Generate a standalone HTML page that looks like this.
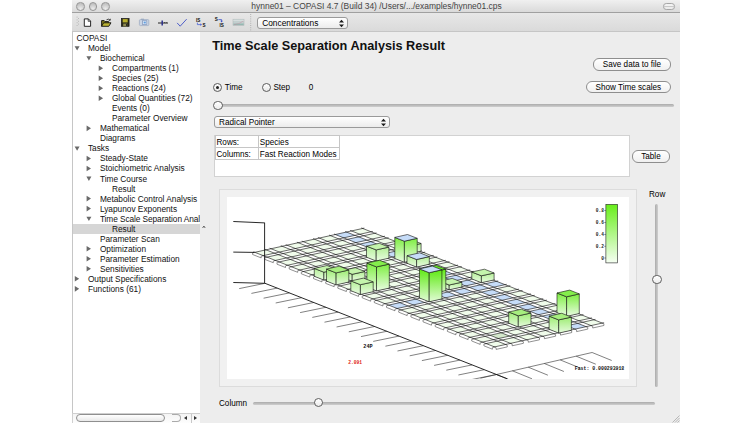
<!DOCTYPE html>
<html><head><meta charset="utf-8">
<style>
html,body{margin:0;padding:0;background:#fff;}
body{width:752px;height:423px;position:relative;overflow:hidden;font-family:"Liberation Sans",sans-serif;color:#000;}
.abs{position:absolute;}
#win{position:absolute;left:72px;top:0;width:608px;height:423px;background:#ededed;}
#title{z-index:2;position:absolute;left:0;top:0;width:608px;height:12.5px;background:linear-gradient(#f0f0f0,#dadada);border-bottom:1px solid #a0a0a0;box-sizing:border-box;}
#title .t{position:absolute;left:1px;width:607px;top:0.6px;height:12px;line-height:11px;text-align:center;font-size:8.45px;color:#444;white-space:nowrap;}
.tl{position:absolute;top:2.1px;width:8.6px;height:8.6px;border-radius:50%;box-sizing:border-box;border:1px solid #969696;background:radial-gradient(circle at 50% 85%,#ededed,#c2c2c2 75%);}
#tb{position:absolute;left:0;top:12px;width:608px;height:20px;background:linear-gradient(#e8e8e8,#dadada);border-bottom:1px solid #c6c6c6;box-sizing:border-box;}
.combo{position:absolute;box-sizing:border-box;border:1px solid #9a9a9a;border-radius:3px;background:linear-gradient(#ffffff,#ececec);font-size:8.2px;white-space:nowrap;}
#tree{position:absolute;left:0px;top:32px;width:128.1px;height:381px;background:#fff;border-left:1px solid #c6c6c6;box-sizing:border-box;overflow:hidden;}
.ti{position:absolute;height:10px;line-height:10px;font-size:8.3px;white-space:nowrap;color:#111;}
.ar{position:absolute;width:0;height:0;}
.ar.r{border-left:4.3px solid #6c6c6c;border-top:2.7px solid transparent;border-bottom:2.7px solid transparent;}
.ar.d{border-top:4.2px solid #6c6c6c;border-left:2.5px solid transparent;border-right:2.5px solid transparent;}
.btn{position:absolute;box-sizing:border-box;border:1px solid #8e8e8e;border-radius:6px;background:linear-gradient(#ffffff,#f0f0f0);font-size:8.15px;text-align:center;white-space:nowrap;}
.lbl{position:absolute;font-size:8.15px;white-space:nowrap;line-height:10px;height:10px;}
.groove{position:absolute;background:linear-gradient(#ababab,#cfcfcf);border-radius:1.6px;}
.groove.v{background:linear-gradient(90deg,#ababab,#cfcfcf);}
.knob{position:absolute;width:9.6px;height:9.6px;border-radius:50%;box-sizing:border-box;border:1px solid #606060;background:linear-gradient(#ffffff,#ececec);}
.radio{position:absolute;width:9px;height:9px;border-radius:50%;box-sizing:border-box;border:1px solid #5c5c5c;background:linear-gradient(#fff,#e8e8e8);}
</style></head><body>
<div id="win">
 <div id="title">
  <div class="tl" style="left:4.3px"></div><div class="tl" style="left:16.7px"></div><div class="tl" style="left:29px"></div>
  <div class="t">hynne01 – COPASI 4.7 (Build 34) /Users/.../examples/hynne01.cps</div>
  <div class="abs" style="left:591.2px;top:3.2px;width:12.2px;height:6.6px;border:1px solid #a6a6a6;border-radius:3.3px;box-sizing:border-box;background:linear-gradient(#f2f2f2 45%,#c9c9c9 50%,#ececec 56%)"></div>
 </div>
 <div id="tb">
  <svg class="abs" style="left:0;top:0" width="190" height="20" viewBox="72 12 190 20">
 <!-- handle -->
 <g fill="#b9b9b9"><rect x="76.6" y="16.6" width="1" height="1"/><rect x="78" y="18" width="1" height="1"/><rect x="76.6" y="19.4" width="1" height="1"/><rect x="78" y="20.8" width="1" height="1"/><rect x="76.6" y="22.2" width="1" height="1"/><rect x="78" y="23.6" width="1" height="1"/><rect x="76.6" y="25" width="1" height="1"/></g>
 <!-- new -->
 <path d="M84.3 18.9 H88.4 L90.6 21.1 V26.3 H84.3 Z" fill="#fff" stroke="#111" stroke-width="0.9" stroke-linejoin="round"/>
 <path d="M88.2 18.9 V21.3 H90.6" fill="none" stroke="#111" stroke-width="0.7"/>
 <!-- open -->
 <path d="M101.6 26.3 V20.6 H104.2 L105 21.6 H108.6 V22.8" fill="#7f7a1c" stroke="#111" stroke-width="0.9" stroke-linejoin="round"/>
 <path d="M101.6 26.3 L103.6 22.8 H111 L108.8 26.3 Z" fill="#bdb533" stroke="#111" stroke-width="0.9" stroke-linejoin="round"/>
 <path d="M106.5 19.8 Q108.6 18.4 110 20 M110.4 18.8 L110.2 20.4 L108.7 20.2" fill="none" stroke="#222" stroke-width="0.8"/>
 <!-- save -->
 <rect x="121.3" y="18.4" width="7.8" height="8" fill="#2a2a1a" stroke="#111" stroke-width="0.6"/>
 <rect x="122.7" y="19.1" width="5" height="3.3" fill="#b7ae2e"/>
 <rect x="123.2" y="23.6" width="4" height="2.8" fill="#8d8a50"/>
 <rect x="126" y="24" width="0.9" height="2" fill="#222"/>
 <!-- camera -->
 <rect x="139.4" y="19.6" width="9.4" height="6" rx="1" fill="#cbd5e3" stroke="#9aa8c0" stroke-width="0.7"/>
 <rect x="141" y="18.7" width="3" height="1.2" fill="#9aa9c0"/>
 <rect x="142.6" y="20.8" width="4.2" height="3.6" fill="#eef3fa" stroke="#6f86b0" stroke-width="0.6"/>
 <rect x="143.6" y="21.6" width="2.2" height="1.9" fill="#5f9fe0"/>
 <!-- slider -->
 <path d="M158 23 H168" stroke="#222" stroke-width="1"/>
 <path d="M162.2 20.4 V25.4" stroke="#2b2f8c" stroke-width="1.5"/>
 <path d="M164.5 22 V23 M166.3 22 V23" stroke="#222" stroke-width="0.6"/>
 <!-- check -->
 <path d="M177.4 23.2 L180.2 26.2 L186.4 19.4" fill="none" stroke="#4050c6" stroke-width="0.9" stroke-linecap="round" stroke-linejoin="round"/>
 <!-- IS->S -->
 <text x="196" y="21.6" font-family="Liberation Sans,sans-serif" font-weight="bold" font-size="4.6" fill="#111">IS</text>
 <path d="M197.4 22.6 V24.6 H201" fill="none" stroke="#4a62d8" stroke-width="0.8"/><path d="M200.4 23.3 L202 24.6 L200.4 25.9Z" fill="#4a62d8"/>
 <text x="202.6" y="27.2" font-family="Liberation Sans,sans-serif" font-weight="bold" font-size="4.6" fill="#111">S</text>
 <!-- S->IS -->
 <text x="214.8" y="21.4" font-family="Liberation Sans,sans-serif" font-weight="bold" font-size="4.6" fill="#111">S</text>
 <path d="M218.4 19.6 H221.6 V21.2" fill="none" stroke="#3b50c8" stroke-width="0.8"/><path d="M220.3 20.8 L221.6 22.4 L222.9 20.8Z" fill="#3b50c8"/>
 <text x="219.6" y="27" font-family="Liberation Sans,sans-serif" font-weight="bold" font-size="4.6" fill="#111">IS</text>
 <!-- plot -->
 <rect x="233" y="19.2" width="11" height="6.4" fill="#c3cfcf" stroke="#aab4b4" stroke-width="0.5"/>
 <path d="M233.5 24.2 H243.6" stroke="#6fa89a" stroke-width="0.8"/>
 <path d="M234 24.6 Q239 24.4 243.4 21" stroke="#c98ca0" stroke-width="0.5" fill="none"/>
 <path d="M233.2 20.2 H243.8" stroke="#e4eaea" stroke-width="0.8"/>
 <!-- separator -->
 <path d="M250.7 14 V31" stroke="#b0b0b0" stroke-width="1" stroke-dasharray="1 1.2"/>
</svg>

  <div class="combo" style="left:184.6px;top:4.5px;width:91.8px;height:12.4px;line-height:11px;padding-left:4.6px;font-size:8.35px">Concentrations
    <svg class="abs" style="left:80.4px;top:1.4px" width="7" height="9" viewBox="0 0 7 9"><path d="M1 3.6 L3.5 0.8 L6 3.6Z M1 5.4 L3.5 8.2 L6 5.4Z" fill="#1a1a1a"/></svg>
  </div>
 </div>
 <div id="tree">
<div class="ti" style="left:3.50px;top:1.10px">COPASI</div>
<div class="ti" style="left:14.90px;top:11.13px">Model</div>
<div class="ti" style="left:26.90px;top:21.16px">Biochemical</div>
<div class="ti" style="left:38.90px;top:31.19px">Compartments (1)</div>
<div class="ti" style="left:38.90px;top:41.22px">Species (25)</div>
<div class="ti" style="left:38.90px;top:51.25px">Reactions (24)</div>
<div class="ti" style="left:38.90px;top:61.28px">Global Quantities (72)</div>
<div class="ti" style="left:38.90px;top:71.31px">Events (0)</div>
<div class="ti" style="left:38.90px;top:81.34px">Parameter Overview</div>
<div class="ti" style="left:26.90px;top:91.37px">Mathematical</div>
<div class="ti" style="left:26.90px;top:101.40px">Diagrams</div>
<div class="ti" style="left:14.90px;top:111.43px">Tasks</div>
<div class="ti" style="left:26.90px;top:121.46px">Steady-State</div>
<div class="ti" style="left:26.90px;top:131.49px">Stoichiometric Analysis</div>
<div class="ti" style="left:26.90px;top:141.52px">Time Course</div>
<div class="ti" style="left:38.90px;top:151.55px">Result</div>
<div class="ti" style="left:26.90px;top:161.58px">Metabolic Control Analysis</div>
<div class="ti" style="left:26.90px;top:171.61px">Lyapunov Exponents</div>
<div class="ti" style="left:26.90px;top:181.64px;letter-spacing:-0.075px;width:100.1px;overflow:hidden">Time Scale Separation Analysis</div>
<div class="abs" style="left:0;top:191.77px;width:128px;height:9.8px;background:#d6d6d6"></div>
<div class="ti" style="left:38.90px;top:191.67px">Result</div>
<div class="ti" style="left:26.90px;top:201.70px">Parameter Scan</div>
<div class="ti" style="left:26.90px;top:211.73px">Optimization</div>
<div class="ti" style="left:26.90px;top:221.76px">Parameter Estimation</div>
<div class="ti" style="left:26.90px;top:231.79px">Sensitivities</div>
<div class="ti" style="left:14.90px;top:241.82px">Output Specifications</div>
<div class="ti" style="left:14.90px;top:251.85px">Functions (61)</div>
<svg class="abs" style="left:0;top:0" width="128" height="381"><path d="M1.60 14.13h5l-2.5 4.4zM13.40 24.16h5l-2.5 4.4zM25.70 33.39l4.4 2.8l-4.4 2.8zM25.70 43.42l4.4 2.8l-4.4 2.8zM25.70 53.45l4.4 2.8l-4.4 2.8zM25.70 63.48l4.4 2.8l-4.4 2.8zM13.60 93.57l4.4 2.8l-4.4 2.8zM1.60 114.43h5l-2.5 4.4zM13.60 123.66l4.4 2.8l-4.4 2.8zM13.60 133.69l4.4 2.8l-4.4 2.8zM13.40 144.52h5l-2.5 4.4zM13.60 163.78l4.4 2.8l-4.4 2.8zM13.60 173.81l4.4 2.8l-4.4 2.8zM13.40 184.64h5l-2.5 4.4zM13.60 213.93l4.4 2.8l-4.4 2.8zM13.60 223.96l4.4 2.8l-4.4 2.8zM13.60 233.99l4.4 2.8l-4.4 2.8zM1.80 244.02l4.4 2.8l-4.4 2.8zM1.80 254.05l4.4 2.8l-4.4 2.8z" fill="#6a6a6a"/></svg>
 </div>
<div class="abs" style="left:0px;top:413px;width:128.1px;height:10px;background:linear-gradient(#f4f4f4,#fdfdfd);border-top:1px solid #cfcfcf;border-left:1px solid #d0d0d0;box-sizing:border-box"></div>
<div class="abs" style="left:4.00px;top:414.3px;width:89px;height:8px;border:1px solid #8f8f8f;border-radius:4px;box-sizing:border-box;background:linear-gradient(#ffffff,#e9e9e9)"></div>
<div class="abs" style="left:100.00px;top:414.3px;width:9px;height:8px;border:1px solid #aaa;border-left:none;border-radius:0 4px 4px 0;box-sizing:border-box;"></div>
<div class="abs" style="left:118.50px;top:414px;width:1px;height:9px;background:#c8c8c8"></div>
<div class="ar" style="position:absolute;left:112.30px;top:416.4px;border-right:3px solid #333;border-top:2px solid transparent;border-bottom:2px solid transparent"></div>
<div class="ar" style="position:absolute;left:121.60px;top:416.4px;border-left:3px solid #333;border-top:2px solid transparent;border-bottom:2px solid transparent"></div>
<svg class="abs" style="left:130.00px;top:224.6px" width="4" height="4" viewBox="0 0 4 4"><path d="M0.6 3 L1.9 1 L3.2 3" stroke="#555" stroke-width="0.9" fill="none"/></svg>
<div class="abs" style="left:140.20px;top:37.5px;font-size:12.7px;font-weight:bold;line-height:16px;white-space:nowrap;color:#111">Time Scale Separation Analysis Result</div>
<div class="btn" style="left:521.30px;top:58.4px;width:77.4px;height:12.4px;line-height:11.2px">Save data to file</div>
<div class="btn" style="left:514.00px;top:81.1px;width:84.7px;height:12.4px;line-height:11.2px">Show Time scales</div>
<div class="btn" style="left:559.80px;top:150px;width:38.4px;height:12.8px;line-height:11.6px">Table</div>
<div class="radio" style="left:140.80px;top:82.8px"></div><div class="abs" style="left:143.80px;top:85.8px;width:3px;height:3px;border-radius:50%;background:#222"></div>
<div class="lbl" style="left:152.80px;top:83.1px">Time</div>
<div class="radio" style="left:189.80px;top:82.8px"></div>
<div class="lbl" style="left:201.40px;top:83.1px">Step</div>
<div class="lbl" style="left:236.80px;top:83.1px">0</div>
<div class="groove" style="left:142.00px;top:104.3px;width:460.2px;height:3.2px"></div>
<div class="knob" style="left:141.00px;top:100.8px"></div>
<div class="combo" style="left:141.50px;top:115.6px;width:176.5px;height:12.2px;line-height:11.6px;padding-left:4.6px">Radical Pointer<svg class="abs" style="left:165.6px;top:1.3px" width="7" height="9" viewBox="0 0 7 9"><path d="M1 3.6 L3.5 0.8 L6 3.6Z M1 5.4 L3.5 8.2 L6 5.4Z" fill="#1a1a1a"/></svg></div>
<div class="abs" style="left:142.10px;top:134.5px;width:415.7px;height:42.2px;background:#fff;border:1px solid #d2d2d2;box-sizing:border-box"></div>
<div class="abs" style="left:142.70px;top:135px;width:124.9px;height:24.6px;border:1px solid #c6c6c6;box-sizing:border-box"></div>
<div class="abs" style="left:142.70px;top:147.2px;width:124.9px;height:1px;background:#c6c6c6"></div>
<div class="abs" style="left:185.80px;top:135px;width:1px;height:24.6px;background:#c6c6c6"></div>
<div class="lbl" style="left:144.50px;top:138.2px">Rows:</div>
<div class="lbl" style="left:187.80px;top:138.2px">Species</div>
<div class="lbl" style="left:144.50px;top:150.2px">Columns:</div>
<div class="lbl" style="left:187.80px;top:150.2px">Fast Reaction Modes</div>
<div class="abs" style="left:147.20px;top:189.4px;width:418.3px;height:197.2px;background:#f1f1f1;border:1px solid #dcdcdc;box-sizing:border-box"></div>
<div class="abs" style="left:154.90px;top:196.9px;width:402.4px;height:182px;background:#fff"></div>
<div class="lbl" style="left:577.00px;top:190.3px">Row</div>
<div class="groove v" style="left:583.00px;top:204px;width:3.2px;height:183px"></div>
<div class="knob" style="left:580.10px;top:274.5px"></div>
<div class="lbl" style="left:147.00px;top:399.2px">Column</div>
<div class="groove" style="left:181.00px;top:401.6px;width:401.8px;height:3.2px"></div>
<div class="knob" style="left:241.50px;top:397.7px"></div>
<svg class="abs" style="left:598.00px;top:413px" width="10" height="10" viewBox="0 0 10 10"><path d="M9.5 2.5 L2.5 9.5 M9.5 5 L5 9.5 M9.5 7.5 L7.5 9.5" stroke="#a8a8a8" stroke-width="0.8" fill="none"/></svg>
<div class="abs" style="left:155.70px;top:196.9px;width:401.6px;height:182px;overflow:hidden"><svg width="401.6" height="182" viewBox="0 0 401.6 182" style="position:absolute;left:0;top:0">
<defs>
<linearGradient id="gp" x1="0" y1="0" x2="0" y2="1"><stop offset="0" stop-color="#b4f096"/><stop offset="1" stop-color="#e9fbe2"/></linearGradient>
 <linearGradient id="gq" x1="0" y1="0" x2="0" y2="1"><stop offset="0" stop-color="#9dec72"/><stop offset="1" stop-color="#e6fbde"/></linearGradient>
<linearGradient id="gm" x1="0" y1="0" x2="0" y2="1"><stop offset="0" stop-color="#7dee40"/><stop offset="1" stop-color="#e9fce2"/></linearGradient>
<linearGradient id="gs" x1="0" y1="0" x2="0" y2="1"><stop offset="0" stop-color="#5fea14"/><stop offset="1" stop-color="#e2fbd6"/></linearGradient>
<linearGradient id="lg" x1="0" y1="0" x2="0" y2="1"><stop offset="0" stop-color="#68ee1a"/><stop offset="1" stop-color="#f6fff3"/></linearGradient>
</defs>
<rect x="0" y="0" width="401.6" height="182" fill="#fff"/>
<polygon points="123.3,33.9 131.9,37.3 143.1,34.8 134.6,31.4" fill="#f0fceb"/>
<polygon points="107.2,37.5 115.8,40.9 127.0,38.4 118.5,35.0" fill="#c6dcf8"/>
<polygon points="91.1,41.0 99.7,44.4 110.9,41.9 102.4,38.6" fill="#f0fceb"/>
<polygon points="75.0,44.6 83.6,48.0 94.8,45.5 86.3,42.1" fill="#f0fceb"/>
<polygon points="58.9,48.2 67.5,51.5 78.7,49.0 70.2,45.7" fill="#f0fceb"/>
<polygon points="42.8,51.7 51.4,55.1 62.6,52.6 54.1,49.2" fill="#f0fceb"/>
<polygon points="26.7,55.3 35.3,58.7 46.5,56.2 38.0,52.8" fill="#f0fceb"/>
<polygon points="135.5,38.7 144.0,42.1 155.3,39.6 146.8,36.2" fill="#f0fceb"/>
<polygon points="119.4,42.3 127.9,45.7 139.2,43.2 130.7,39.8" fill="#c6dcf8"/>
<polygon points="103.3,45.9 111.8,49.2 123.1,46.7 114.6,43.4" fill="#f0fceb"/>
<polygon points="87.2,49.4 95.7,52.8 107.0,50.3 98.5,46.9" fill="#f0fceb"/>
<polygon points="71.1,53.0 79.6,56.3 90.9,53.8 82.4,50.5" fill="#f0fceb"/>
<polygon points="55.0,56.5 63.5,59.9 74.8,57.4 66.3,54.0" fill="#f0fceb"/>
<polygon points="38.9,60.1 47.4,63.5 58.7,61.0 50.2,57.6" fill="#f0fceb"/>
<polygon points="147.7,43.5 156.2,46.9 167.5,44.4 159.0,41.0" fill="#f0fceb"/>
<polygon points="131.6,47.1 140.1,50.5 151.4,48.0 142.9,44.6" fill="#c6dcf8"/>
<polygon points="115.5,50.7 124.0,54.0 135.3,51.5 126.8,48.2" fill="#f0fceb"/>
<polygon points="99.4,54.2 107.9,57.6 119.2,55.1 110.7,51.7" fill="#f0fceb"/>
<polygon points="83.3,57.8 91.8,61.1 103.1,58.6 94.6,55.3" fill="#f0fceb"/>
<polygon points="67.2,61.3 75.7,64.7 87.0,62.2 78.5,58.8" fill="#f0fceb"/>
<polygon points="51.1,64.9 59.6,68.3 70.9,65.8 62.4,62.4" fill="#f0fceb"/>
<polygon points="159.9,48.3 168.4,51.7 179.6,49.2 171.1,45.8" fill="#f0fceb"/>
<polygon points="143.8,51.9 152.3,55.3 163.5,52.8 155.0,49.4" fill="#c6dcf8"/>
<polygon points="127.7,55.5 136.2,58.8 147.4,56.3 138.9,53.0" fill="#f0fceb"/>
<polygon points="111.6,59.0 120.1,62.4 131.3,59.9 122.8,56.5" fill="#f0fceb"/>
<polygon points="95.5,62.6 104.0,65.9 115.2,63.5 106.7,60.1" fill="#f0fceb"/>
<polygon points="79.4,66.1 87.9,69.5 99.1,67.0 90.6,63.6" fill="#f0fceb"/>
<polygon points="63.3,69.7 71.8,73.1 83.0,70.6 74.5,67.2" fill="#f0fceb"/>
<polygon points="172.0,53.1 180.5,56.5 191.8,54.0 183.3,50.7" fill="#f0fceb"/>
<polygon points="155.9,56.7 164.4,60.1 175.7,57.6 167.2,54.2" fill="#c6dcf8"/>
<polygon points="139.8,60.3 148.3,63.6 159.6,61.1 151.1,57.8" fill="#f0fceb"/>
<polygon points="123.7,63.8 132.2,67.2 143.5,64.7 135.0,61.3" fill="#f0fceb"/>
<polygon points="107.6,67.4 116.1,70.8 127.4,68.3 118.9,64.9" fill="#f0fceb"/>
<polygon points="91.5,70.9 100.0,74.3 111.3,71.8 102.8,68.5" fill="#f0fceb"/>
<polygon points="75.4,74.5 83.9,77.9 95.2,75.4 86.7,72.0" fill="#f0fceb"/>
<polygon points="184.2,58.0 192.7,61.3 204.0,58.8 195.5,55.5" fill="#f0fceb"/>
<polygon points="168.1,61.5 176.6,64.9 187.9,62.4 179.4,59.0" fill="#c6dcf8"/>
<polygon points="152.0,65.1 160.5,68.4 171.8,65.9 163.3,62.6" fill="#f0fceb"/>
<polygon points="135.9,68.6 144.4,72.0 155.7,69.5 147.2,66.1" fill="#f0fceb"/>
<polygon points="119.8,72.2 128.3,75.6 139.6,73.1 131.1,69.7" fill="#f0fceb"/>
<polygon points="103.7,75.8 112.2,79.1 123.5,76.6 115.0,73.3" fill="#f0fceb"/>
<polygon points="87.6,79.3 96.1,82.7 107.4,80.2 98.9,76.8" fill="#f0fceb"/>
<polygon points="196.4,62.8 204.9,66.1 216.1,63.6 207.6,60.3" fill="#f0fceb"/>
<polygon points="180.3,66.3 188.8,69.7 200.0,67.2 191.5,63.8" fill="#c6dcf8"/>
<polygon points="164.2,69.9 172.7,73.2 183.9,70.7 175.4,67.4" fill="#f0fceb"/>
<polygon points="148.1,73.4 156.6,76.8 167.8,74.3 159.3,70.9" fill="#f0fceb"/>
<polygon points="132.0,77.0 140.5,80.4 151.7,77.9 143.2,74.5" fill="#f0fceb"/>
<polygon points="115.9,80.6 124.4,83.9 135.6,81.4 127.1,78.1" fill="#f0fceb"/>
<polygon points="99.8,84.1 108.3,87.5 119.5,85.0 111.0,81.6" fill="#f0fceb"/>
<polygon points="208.5,67.6 217.0,70.9 228.3,68.4 219.8,65.1" fill="#f0fceb"/>
<polygon points="192.4,71.1 200.9,74.5 212.2,72.0 203.7,68.6" fill="#c6dcf8"/>
<polygon points="176.3,74.7 184.8,78.0 196.1,75.6 187.6,72.2" fill="#f0fceb"/>
<polygon points="160.2,78.2 168.7,81.6 180.0,79.1 171.5,75.7" fill="#f0fceb"/>
<polygon points="144.1,81.8 152.6,85.2 163.9,82.7 155.4,79.3" fill="#f0fceb"/>
<polygon points="128.0,85.4 136.5,88.7 147.8,86.2 139.3,82.9" fill="#f0fceb"/>
<polygon points="111.9,88.9 120.4,92.3 131.7,89.8 123.2,86.4" fill="#f0fceb"/>
<polygon points="220.7,72.4 229.2,75.7 240.5,73.2 232.0,69.9" fill="#f0fceb"/>
<polygon points="204.6,75.9 213.1,79.3 224.4,76.8 215.9,73.4" fill="#c6dcf8"/>
<polygon points="188.5,79.5 197.0,82.9 208.3,80.4 199.8,77.0" fill="#f0fceb"/>
<polygon points="172.4,83.0 180.9,86.4 192.2,83.9 183.7,80.6" fill="#f0fceb"/>
<polygon points="156.3,86.6 164.8,90.0 176.1,87.5 167.6,84.1" fill="#f0fceb"/>
<polygon points="140.2,90.2 148.7,93.5 160.0,91.0 151.5,87.7" fill="#f0fceb"/>
<polygon points="124.1,93.7 132.6,97.1 143.9,94.6 135.4,91.2" fill="#f0fceb"/>
<polygon points="232.9,77.2 241.4,80.5 252.7,78.0 244.1,74.7" fill="#f0fceb"/>
<polygon points="216.8,80.7 225.3,84.1 236.6,81.6 228.0,78.2" fill="#c6dcf8"/>
<polygon points="200.7,84.3 209.2,87.7 220.5,85.2 211.9,81.8" fill="#f0fceb"/>
<polygon points="184.6,87.9 193.1,91.2 204.4,88.7 195.8,85.4" fill="#f0fceb"/>
<polygon points="168.5,91.4 177.0,94.8 188.3,92.3 179.7,88.9" fill="#f0fceb"/>
<polygon points="152.4,95.0 160.9,98.3 172.2,95.8 163.6,92.5" fill="#f0fceb"/>
<polygon points="136.3,98.5 144.8,101.9 156.1,99.4 147.5,96.0" fill="#f0fceb"/>
<polygon points="245.0,82.0 253.6,85.3 264.8,82.8 256.3,79.5" fill="#f0fceb"/>
<polygon points="228.9,85.5 237.5,88.9 248.7,86.4 240.2,83.0" fill="#c6dcf8"/>
<polygon points="212.8,89.1 221.4,92.5 232.6,90.0 224.1,86.6" fill="#f0fceb"/>
<polygon points="196.7,92.7 205.3,96.0 216.5,93.5 208.0,90.2" fill="#f0fceb"/>
<polygon points="180.6,96.2 189.2,99.6 200.4,97.1 191.9,93.7" fill="#f0fceb"/>
<polygon points="164.5,99.8 173.1,103.1 184.3,100.6 175.8,97.3" fill="#f0fceb"/>
<polygon points="148.4,103.3 157.0,106.7 168.2,104.2 159.7,100.8" fill="#f0fceb"/>
<polygon points="257.2,86.8 265.7,90.1 277.0,87.7 268.5,84.3" fill="#c6dcf8"/>
<polygon points="241.1,90.3 249.6,93.7 260.9,91.2 252.4,87.8" fill="#c6dcf8"/>
<polygon points="225.0,93.9 233.5,97.3 244.8,94.8 236.3,91.4" fill="#c6dcf8"/>
<polygon points="208.9,97.5 217.4,100.8 228.7,98.3 220.2,95.0" fill="#c6dcf8"/>
<polygon points="192.8,101.0 201.3,104.4 212.6,101.9 204.1,98.5" fill="#c6dcf8"/>
<polygon points="176.7,104.6 185.2,107.9 196.5,105.5 188.0,102.1" fill="#c6dcf8"/>
<polygon points="160.6,108.1 169.1,111.5 180.4,109.0 171.9,105.6" fill="#c6dcf8"/>
<polygon points="269.4,91.6 277.9,95.0 289.2,92.5 280.7,89.1" fill="#f0fceb"/>
<polygon points="253.3,95.1 261.8,98.5 273.1,96.0 264.6,92.7" fill="#c6dcf8"/>
<polygon points="237.2,98.7 245.7,102.1 257.0,99.6 248.5,96.2" fill="#f0fceb"/>
<polygon points="221.1,102.3 229.6,105.6 240.9,103.1 232.4,99.8" fill="#f0fceb"/>
<polygon points="205.0,105.8 213.5,109.2 224.8,106.7 216.3,103.3" fill="#f0fceb"/>
<polygon points="188.9,109.4 197.4,112.8 208.7,110.3 200.2,106.9" fill="#f0fceb"/>
<polygon points="172.8,112.9 181.3,116.3 192.6,113.8 184.1,110.5" fill="#f0fceb"/>
<polygon points="281.6,96.4 290.1,99.8 301.3,97.3 292.8,93.9" fill="#f0fceb"/>
<polygon points="265.5,100.0 274.0,103.3 285.2,100.8 276.7,97.5" fill="#c6dcf8"/>
<polygon points="249.4,103.5 257.9,106.9 269.1,104.4 260.6,101.0" fill="#f0fceb"/>
<polygon points="233.3,107.1 241.8,110.4 253.0,107.9 244.5,104.6" fill="#f0fceb"/>
<polygon points="217.2,110.6 225.7,114.0 236.9,111.5 228.4,108.1" fill="#f0fceb"/>
<polygon points="201.1,114.2 209.6,117.6 220.8,115.1 212.3,111.7" fill="#f0fceb"/>
<polygon points="185.0,117.8 193.5,121.1 204.7,118.6 196.2,115.3" fill="#f0fceb"/>
<polygon points="293.7,101.2 302.2,104.6 313.5,102.1 305.0,98.7" fill="#f0fceb"/>
<polygon points="277.6,104.8 286.1,108.1 297.4,105.6 288.9,102.3" fill="#c6dcf8"/>
<polygon points="261.5,108.3 270.0,111.7 281.3,109.2 272.8,105.8" fill="#f0fceb"/>
<polygon points="245.4,111.9 253.9,115.2 265.2,112.7 256.7,109.4" fill="#f0fceb"/>
<polygon points="229.3,115.4 237.8,118.8 249.1,116.3 240.6,112.9" fill="#f0fceb"/>
<polygon points="213.2,119.0 221.7,122.4 233.0,119.9 224.5,116.5" fill="#f0fceb"/>
<polygon points="197.1,122.6 205.6,125.9 216.9,123.4 208.4,120.1" fill="#f0fceb"/>
<polygon points="305.9,106.0 314.4,109.4 325.7,106.9 317.2,103.5" fill="#f0fceb"/>
<polygon points="289.8,109.6 298.3,112.9 309.6,110.4 301.1,107.1" fill="#c6dcf8"/>
<polygon points="273.7,113.1 282.2,116.5 293.5,114.0 285.0,110.6" fill="#f0fceb"/>
<polygon points="257.6,116.7 266.1,120.0 277.4,117.6 268.9,114.2" fill="#f0fceb"/>
<polygon points="241.5,120.2 250.0,123.6 261.3,121.1 252.8,117.7" fill="#f0fceb"/>
<polygon points="225.4,123.8 233.9,127.2 245.2,124.7 236.7,121.3" fill="#f0fceb"/>
<polygon points="209.3,127.4 217.8,130.7 229.1,128.2 220.6,124.9" fill="#f0fceb"/>
<polygon points="318.1,110.8 326.6,114.2 337.8,111.7 329.3,108.3" fill="#f0fceb"/>
<polygon points="302.0,114.4 310.5,117.7 321.7,115.2 313.2,111.9" fill="#c6dcf8"/>
<polygon points="285.9,117.9 294.4,121.3 305.6,118.8 297.1,115.4" fill="#f0fceb"/>
<polygon points="269.8,121.5 278.3,124.9 289.5,122.4 281.0,119.0" fill="#f0fceb"/>
<polygon points="253.7,125.0 262.2,128.4 273.4,125.9 264.9,122.6" fill="#f0fceb"/>
<polygon points="237.6,128.6 246.1,132.0 257.3,129.5 248.8,126.1" fill="#f0fceb"/>
<polygon points="221.5,132.2 230.0,135.5 241.2,133.0 232.7,129.7" fill="#f0fceb"/>
<polygon points="330.2,115.6 338.7,119.0 350.0,116.5 341.5,113.1" fill="#f0fceb"/>
<polygon points="314.1,119.2 322.6,122.5 333.9,120.0 325.4,116.7" fill="#c6dcf8"/>
<polygon points="298.0,122.7 306.5,126.1 317.8,123.6 309.3,120.2" fill="#f0fceb"/>
<polygon points="281.9,126.3 290.4,129.7 301.7,127.2 293.2,123.8" fill="#f0fceb"/>
<polygon points="265.8,129.9 274.3,133.2 285.6,130.7 277.1,127.4" fill="#f0fceb"/>
<polygon points="249.7,133.4 258.2,136.8 269.5,134.3 261.0,130.9" fill="#f0fceb"/>
<polygon points="233.6,137.0 242.1,140.3 253.4,137.8 244.9,134.5" fill="#f0fceb"/>
<polygon points="342.4,120.4 350.9,123.8 362.2,121.3 353.7,117.9" fill="#f0fceb"/>
<polygon points="326.3,124.0 334.8,127.3 346.1,124.8 337.6,121.5" fill="#c6dcf8"/>
<polygon points="310.2,127.5 318.7,130.9 330.0,128.4 321.5,125.0" fill="#f0fceb"/>
<polygon points="294.1,131.1 302.6,134.5 313.9,132.0 305.4,128.6" fill="#f0fceb"/>
<polygon points="278.0,134.7 286.5,138.0 297.8,135.5 289.3,132.2" fill="#f0fceb"/>
<polygon points="261.9,138.2 270.4,141.6 281.7,139.1 273.2,135.7" fill="#d4e8cc"/>
<polygon points="245.8,141.8 254.3,145.1 265.6,142.6 257.1,139.3" fill="#f0fceb"/>
<polygon points="354.6,125.2 363.1,128.6 374.4,126.1 365.8,122.7" fill="#f0fceb"/>
<polygon points="338.5,128.8 347.0,132.1 358.3,129.7 349.7,126.3" fill="#c6dcf8"/>
<polygon points="322.4,132.3 330.9,135.7 342.2,133.2 333.6,129.8" fill="#f0fceb"/>
<polygon points="306.3,135.9 314.8,139.3 326.1,136.8 317.5,133.4" fill="#f0fceb"/>
<polygon points="290.2,139.5 298.7,142.8 310.0,140.3 301.4,137.0" fill="#f0fceb"/>
<polygon points="274.1,143.0 282.6,146.4 293.9,143.9 285.3,140.5" fill="#f0fceb"/>
<polygon points="258.0,146.6 266.5,149.9 277.8,147.5 269.2,144.1" fill="#f0fceb"/>
<path d="M25.1 55.7L136.3 31.1M33.6 59.0L144.8 34.4M37.2 60.5L148.5 35.9M45.7 63.8L157.0 39.2M49.4 65.3L160.6 40.7M57.9 68.6L169.2 44.0M61.6 70.1L172.8 45.5M70.1 73.4L181.3 48.8M73.7 74.9L185.0 50.3M82.2 78.2L193.5 53.6M85.9 79.7L197.2 55.1M94.4 83.0L205.7 58.4M98.1 84.5L209.3 59.9M106.6 87.9L217.8 63.3M110.2 89.3L221.5 64.7M118.8 92.7L230.0 68.1M122.4 94.1L233.7 69.5M130.9 97.5L242.2 72.9M134.6 98.9L245.8 74.3M143.1 102.3L254.4 77.7M146.8 103.7L258.0 79.1M155.3 107.1L266.5 82.5M158.9 108.5L270.2 83.9M167.4 111.9L278.7 87.3M171.1 113.3L282.3 88.7M179.6 116.7L290.9 92.1M183.3 118.1L294.5 93.5M191.8 121.5L303.0 96.9M195.4 122.9L306.7 98.3M203.9 126.3L315.2 101.7M207.6 127.7L318.9 103.1M216.1 131.1L327.4 106.5M219.8 132.5L331.0 107.9M228.3 135.9L339.5 111.3M231.9 137.3L343.2 112.7M240.5 140.7L351.7 116.1M244.1 142.2L355.4 117.6M252.6 145.5L363.9 120.9M256.3 147.0L367.5 122.4M264.8 150.3L376.1 125.7M25.5 54.8L267.8 150.4M36.7 52.3L279.0 148.0M41.6 51.2L283.9 146.9M52.8 48.7L295.1 144.4M57.7 47.7L300.0 143.3M68.9 45.2L311.2 140.8M73.8 44.1L316.1 139.8M85.0 41.6L327.3 137.3M89.9 40.5L332.2 136.2M101.1 38.1L343.4 133.7M106.0 37.0L348.3 132.6M117.2 34.5L359.5 130.2M122.1 33.4L364.4 129.1M133.3 30.9L375.6 126.6" stroke="#111" stroke-width="0.62" fill="none"/>
<path d="M24.6 55.7l0 1.8L33.2 60.9l0 -1.8M36.8 60.6l0 1.8L45.3 65.7l0 -1.8M49.0 65.4l0 1.8L57.5 70.5l0 -1.8M61.2 70.2l0 1.8L69.7 75.3l0 -1.8M73.3 75.0l0 1.8L81.8 80.1l0 -1.8M85.5 79.8l0 1.8L94.0 84.9l0 -1.8M97.7 84.6l0 1.8L106.2 89.7l0 -1.8M109.8 89.4l0 1.8L118.4 94.5l0 -1.8M122.0 94.2l0 1.8L130.5 99.4l0 -1.8M134.2 99.0l0 1.8L142.7 104.2l0 -1.8M146.3 103.8l0 1.8L154.9 109.0l0 -1.8M158.5 108.6l0 1.8L167.0 113.8l0 -1.8M170.7 113.4l0 1.8L179.2 118.6l0 -1.8M182.9 118.2l0 1.8L191.4 123.4l0 -1.8M195.0 123.0l0 1.8L203.5 128.2l0 -1.8M207.2 127.8l0 1.8L215.7 133.0l0 -1.8M219.4 132.6l0 1.8L227.9 137.8l0 -1.8M231.5 137.4l0 1.8L240.1 142.6l0 -1.8M243.7 142.2l0 1.8L252.2 147.4l0 -1.8M255.9 147.0l0 1.8L264.4 152.2l0 -1.8M268.1 150.6l0 1.8L279.3 149.9l0 -1.8M284.2 147.0l0 1.8L295.4 146.3l0 -1.8M300.3 143.4l0 1.8L311.5 142.8l0 -1.8M316.4 139.9l0 1.8L327.6 139.2l0 -1.8M332.5 136.3l0 1.8L343.7 135.6l0 -1.8M348.6 132.8l0 1.8L359.8 132.1l0 -1.8M364.7 129.2l0 1.8L375.9 128.5l0 -1.8" stroke="#222" stroke-width="0.5" fill="none"/>
<path d="M37.0 86.3L11.2 91.6M49.2 91.1L23.4 96.4M61.4 95.9L35.6 101.2M73.5 100.7L47.7 106.0M85.7 105.5L59.9 110.8M97.9 110.3L72.1 115.6M110.1 115.1L84.3 120.4M122.3 119.9L96.5 125.2M134.4 124.7L108.6 130.0M146.6 129.5L120.8 134.8M158.8 134.3L133.0 139.6M171.0 139.1L145.2 144.4M183.2 143.9L157.4 149.2M195.3 148.7L169.5 154.0M207.5 153.5L181.7 158.8M219.7 158.3L193.9 163.6M231.9 163.1L206.1 168.4M244.1 167.9L218.3 173.2M256.2 172.7L230.4 178.0M268.4 177.5L242.6 182.8M252.5 181.2L364.1 155.5M268.4 177.5L288.0 185.5M284.4 173.8L304.0 181.8M300.3 170.2L319.9 178.2M316.3 166.5L335.9 174.5M332.2 162.9L351.8 170.9M348.2 159.2L367.8 167.2M364.1 155.5L383.7 163.5" stroke="#333" stroke-width="0.62" fill="none"/>
<path d="M36.6 25.7L36.6 86.3M5.3 24.5L36.6 25.9M5.3 55.1L26.3 55.4M5.3 85.5L36.6 86.3M37.0 86.3L279.4 181.8" stroke="#111" stroke-width="0.9" fill="none"/>
<g stroke="#151515" stroke-width="0.62" stroke-linejoin="round"><polygon points="170.7,53.1 180.4,56.9 180.4,49.3 170.7,45.5" fill="url(#gp)"/><polygon points="180.4,56.9 193.1,54.1 193.1,46.5 180.4,49.3" fill="url(#gp)"/><polygon points="170.7,45.5 180.4,49.3 193.1,46.5 183.5,42.7" fill="#c4f4ac"/></g>
<g stroke="#151515" stroke-width="0.62" stroke-linejoin="round"><polygon points="138.5,60.2 148.2,64.0 148.2,52.9 138.5,49.1" fill="url(#gp)"/><polygon points="148.2,64.0 160.9,61.2 160.9,50.1 148.2,52.9" fill="url(#gp)"/><polygon points="138.5,49.1 148.2,52.9 160.9,50.1 151.3,46.3" fill="#c4f4ac"/></g>
<g stroke="#151515" stroke-width="0.62" stroke-linejoin="round"><polygon points="166.8,61.5 176.4,65.3 176.4,44.2 166.8,40.4" fill="url(#gm)"/><polygon points="176.4,65.3 189.2,62.4 189.2,41.3 176.4,44.2" fill="url(#gm)"/><polygon points="166.8,40.4 176.4,44.2 189.2,41.3 179.5,37.5" fill="#c6dcf8"/></g>
<g stroke="#151515" stroke-width="0.62" stroke-linejoin="round"><polygon points="179.0,66.3 188.6,70.1 188.6,62.5 179.0,58.7" fill="url(#gp)"/><polygon points="188.6,70.1 201.3,67.2 201.3,59.6 188.6,62.5" fill="url(#gp)"/><polygon points="179.0,58.7 188.6,62.5 201.3,59.6 191.7,55.8" fill="#c6dcf8"/></g>
<g stroke="#151515" stroke-width="0.62" stroke-linejoin="round"><polygon points="86.3,79.3 95.9,83.1 95.9,75.2 86.3,71.4" fill="url(#gp)"/><polygon points="95.9,83.1 108.7,80.2 108.7,72.3 95.9,75.2" fill="url(#gp)"/><polygon points="86.3,71.4 95.9,75.2 108.7,72.3 99.0,68.5" fill="#c4f4ac"/></g>
<g stroke="#151515" stroke-width="0.62" stroke-linejoin="round"><polygon points="114.6,80.5 124.2,84.3 124.2,77.3 114.6,73.5" fill="url(#gp)"/><polygon points="124.2,84.3 136.9,81.5 136.9,74.5 124.2,77.3" fill="url(#gp)"/><polygon points="114.6,73.5 124.2,77.3 136.9,74.5 127.3,70.7" fill="#c4f4ac"/></g>
<g stroke="#151515" stroke-width="0.62" stroke-linejoin="round"><polygon points="243.8,81.9 253.4,85.7 253.4,78.8 243.8,75.0" fill="url(#gp)"/><polygon points="253.4,85.7 266.1,82.9 266.1,76.0 253.4,78.8" fill="url(#gp)"/><polygon points="243.8,75.0 253.4,78.8 266.1,76.0 256.5,72.2" fill="#c4f4ac"/></g>
<g stroke="#151515" stroke-width="0.62" stroke-linejoin="round"><polygon points="98.5,84.1 108.1,87.9 108.1,75.9 98.5,72.1" fill="url(#gq)"/><polygon points="108.1,87.9 120.8,85.0 120.8,73.0 108.1,75.9" fill="url(#gq)"/><polygon points="98.5,72.1 108.1,75.9 120.8,73.0 111.2,69.2" fill="#a6ee7e"/></g>
<g stroke="#151515" stroke-width="0.62" stroke-linejoin="round"><polygon points="211.6,89.0 221.2,92.8 221.2,88.0 211.6,84.2" fill="url(#gp)"/><polygon points="221.2,92.8 233.9,90.0 233.9,85.2 221.2,88.0" fill="url(#gp)"/><polygon points="211.6,84.2 221.2,88.0 233.9,85.2 224.3,81.4" fill="#c4f4ac"/></g>
<g stroke="#151515" stroke-width="0.62" stroke-linejoin="round"><polygon points="138.9,90.1 148.5,93.9 148.5,69.9 138.9,66.1" fill="url(#gm)"/><polygon points="148.5,93.9 161.3,91.1 161.3,67.1 148.5,69.9" fill="url(#gm)"/><polygon points="138.9,66.1 148.5,69.9 161.3,67.1 151.6,63.3" fill="#84ee4c"/></g>
<g stroke="#151515" stroke-width="0.62" stroke-linejoin="round"><polygon points="195.5,92.6 205.1,96.4 205.1,74.9 195.5,71.1" fill="url(#gs)"/><polygon points="205.1,96.4 217.8,93.6 217.8,72.1 205.1,74.9" fill="url(#gs)"/><polygon points="195.5,71.1 205.1,74.9 217.8,72.1 208.2,68.3" fill="#62e81e"/></g>
<g stroke="#151515" stroke-width="0.62" stroke-linejoin="round"><polygon points="122.8,93.7 132.4,97.5 132.4,87.7 122.8,83.9" fill="url(#gp)"/><polygon points="132.4,97.5 145.2,94.7 145.2,84.9 132.4,87.7" fill="url(#gp)"/><polygon points="122.8,83.9 132.4,87.7 145.2,84.9 135.5,81.1" fill="#c4f4ac"/></g>
<g stroke="#151515" stroke-width="0.62" stroke-linejoin="round"><polygon points="191.5,101.0 201.2,104.8 201.2,75.7 191.5,71.9" fill="url(#gs)"/><polygon points="201.2,104.8 213.9,101.9 213.9,72.8 201.2,75.7" fill="url(#gs)"/><polygon points="191.5,71.9 201.2,75.7 213.9,72.8 204.3,69.1" fill="#c6dcf8"/></g>
<g stroke="#151515" stroke-width="0.62" stroke-linejoin="round"><polygon points="329.0,115.6 338.6,119.4 338.6,99.8 329.0,96.0" fill="url(#gm)"/><polygon points="338.6,119.4 351.3,116.5 351.3,96.9 338.6,99.8" fill="url(#gm)"/><polygon points="329.0,96.0 338.6,99.8 351.3,96.9 341.7,93.1" fill="#84ee4c"/></g>
<g stroke="#151515" stroke-width="0.62" stroke-linejoin="round"><polygon points="280.7,126.2 290.3,130.0 290.3,118.8 280.7,115.0" fill="url(#gq)"/><polygon points="290.3,130.0 303.0,127.2 303.0,116.0 290.3,118.8" fill="url(#gq)"/><polygon points="280.7,115.0 290.3,118.8 303.0,116.0 293.4,112.2" fill="#a6ee7e"/></g>
<g stroke="#151515" stroke-width="0.62" stroke-linejoin="round"><polygon points="321.1,132.3 330.7,136.1 330.7,122.9 321.1,119.1" fill="url(#gq)"/><polygon points="330.7,136.1 343.4,133.3 343.4,120.1 330.7,122.9" fill="url(#gq)"/><polygon points="321.1,119.1 330.7,122.9 343.4,120.1 333.8,116.3" fill="#a6ee7e"/></g>
<rect x="377.9" y="7.4" width="11.7" height="58.5" fill="url(#lg)" stroke="#222" stroke-width="0.6"/>
<text x="375.9" y="15.1" font-family="Liberation Mono,monospace" font-weight="bold" font-size="4.5" text-anchor="end" fill="#222">0.8</text>
<path d="M376.3 13.5h1.6" stroke="#222" stroke-width="0.5"/>
<text x="375.9" y="27.1" font-family="Liberation Mono,monospace" font-weight="bold" font-size="4.5" text-anchor="end" fill="#222">0.6</text>
<path d="M376.3 25.5h1.6" stroke="#222" stroke-width="0.5"/>
<text x="375.9" y="39.1" font-family="Liberation Mono,monospace" font-weight="bold" font-size="4.5" text-anchor="end" fill="#222">0.4</text>
<path d="M376.3 37.5h1.6" stroke="#222" stroke-width="0.5"/>
<text x="375.9" y="50.9" font-family="Liberation Mono,monospace" font-weight="bold" font-size="4.5" text-anchor="end" fill="#222">0.2</text>
<path d="M376.3 49.3h1.6" stroke="#222" stroke-width="0.5"/>
<text x="375.9" y="62.6" font-family="Liberation Mono,monospace" font-weight="bold" font-size="4.5" text-anchor="end" fill="#222">0</text>
<path d="M376.3 61.0h1.6" stroke="#222" stroke-width="0.5"/>
<text x="135.3" y="150.6" font-family="Liberation Mono,monospace" font-weight="bold" font-size="5.2" fill="#111">24P</text>
<text x="120.3" y="167.1" font-family="Liberation Mono,monospace" font-weight="bold" font-size="4.6" fill="#e02010">2.091</text>
<text x="346.8" y="172.9" font-family="Liberation Mono,monospace" font-weight="bold" font-size="5.4" fill="#111" textLength="49.5" lengthAdjust="spacingAndGlyphs">Fast: 0.000293918</text>
</svg></div>
</div>
</body></html>
